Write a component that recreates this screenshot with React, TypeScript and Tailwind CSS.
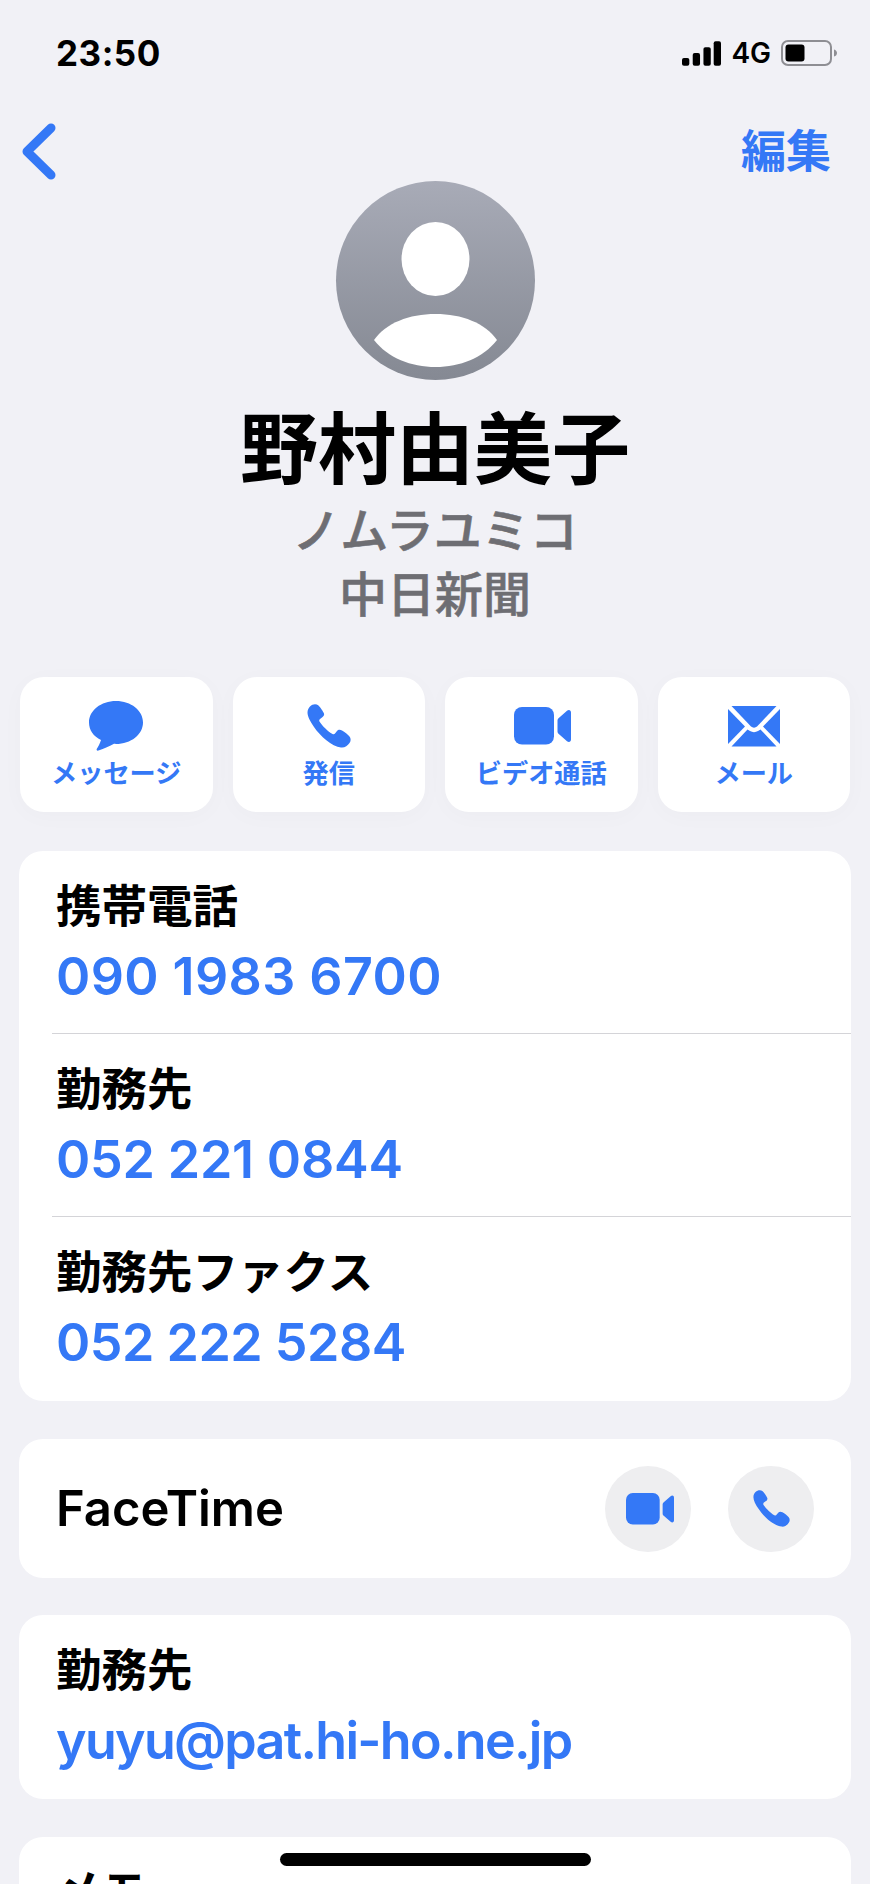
import React from 'react';

const jp = 'font-["Inter","Noto_Sans_CJK_JP",sans-serif]';

const PhoneIcon = ({ className }: { className: string }) => (
    <svg viewBox="0 0 44 44" className={className} fill="currentColor">
        <path d="M3 2.5C5.5 0 9-.5 11.5 1.5C13 3 16 7 17 9.5C17.5 11 16.5 12.5 15 13.5L13 15C12 15.8 12 17 12.8 18C15.5 22 21 27.5 25.5 30C26.5 30.6 27.5 30.3 28.2 29.2L30 27C31 25.7 33 25.3 35 26.5C37.5 28 41 30.5 42.5 32.5C44 34.5 44 37 42.5 39C40.5 42 37.5 44 34 43.5C25 42.5 13 32 7 23C3 17 .5 12.5 .5 8.5C.5 6 1.5 4 3 2.5Z" />
    </svg>
);

const VideoIcon = ({ className }: { className: string }) => (
    <svg viewBox="0 0 57 38" className={className} fill="currentColor">
        <rect x="0" y="0" width="40" height="37.5" rx="8" />
        <path d="M43.5 13.5C43.5 12.5 44 11.7 44.8 11L53 3.8C54.8 2.3 57 3 57 5.5V32.5C57 35 54.8 35.7 53 34.2L44.8 27C44 26.3 43.5 25.5 43.5 24.5Z" />
    </svg>
);

const MessageIcon = () => (
    <svg viewBox="0 0 54 50" className="w-[54px] h-[50px] text-[#3478f6]" fill="currentColor">
        <path d="M27 0C12 0 0 9.5 0 21.5C0 29 4.5 35.5 12 39C11 42.5 9 46 8 47.5C7 49 8 50 9.5 49.5C15 48 21 45 25 42.8C25.7 42.8 26.3 43 27 43C42 43 54 33.5 54 21.5C54 9.5 42 0 27 0Z" />
    </svg>
);

const MailIcon = () => (
    <svg viewBox="0 0 52 41" className="w-[52px] h-[41px] text-[#3478f6]" fill="currentColor">
        <path d="M3.5 0H48.5L29 20.5C27.5 22 24.5 22 23 20.5Z" />
        <path d="M0 3L17 20.5L0 38Z" />
        <path d="M52 3L35 20.5L52 38Z" />
        <path d="M3.5 40.5L19.5 23.5L22 25C24.5 26.5 27.5 26.5 30 25L32.5 23.5L48.5 40.5Z" />
    </svg>
);

const actions = [
    { label: 'メッセージ', icon: <MessageIcon /> },
    { label: '発信', icon: <PhoneIcon className="w-[44px] h-[44px] text-[#3478f6]" /> },
    { label: 'ビデオ通話', icon: <VideoIcon className="ml-[3px] w-[57px] h-[38px] text-[#3478f6]" /> },
    { label: 'メール', icon: <MailIcon /> },
];

const phones = [
    { label: '携帯電話', value: '090 1983 6700', track: 'tracking-[0.4px]' },
    { label: '勤務先', value: '052 221 0844', track: 'tracking-[-0.2px]' },
    { label: '勤務先ファクス', value: '052 222 5284', track: 'tracking-[-0.5px]' },
];

const Field = ({ label, value, track }: { label: string; value: string; track: string }) => (
    <div className="pt-[31px]">
        <div className="text-[45.5px] leading-[50px] font-semibold text-black">{label}</div>
        <div className={`mt-[13px] text-[52px] leading-[64px] font-semibold text-[#3478f6] ${track}`}>{value}</div>
    </div>
);

export default function App() {
    return (
        <div className={`${jp} relative w-[870px] h-[1884px] overflow-hidden bg-[#f1f1f6]`}>
            {/* status bar */}
            <div className="h-[122px] pl-[56px] pr-[33px] pt-[34px] flex justify-between items-start">
                <span className="text-[35px] leading-[38px] font-bold text-black tracking-[0.5px]">23:50</span>
                <div className="flex items-center gap-[10px] h-[38px]">
                    <svg viewBox="0 0 40 25" className="w-[39px] h-[25px]" fill="black">
                        <rect x="0" y="17" width="7.5" height="8" rx="2" />
                        <rect x="11" y="12" width="7.5" height="13" rx="2" />
                        <rect x="22" y="6" width="7.5" height="19" rx="2" />
                        <rect x="32.5" y="0" width="7.5" height="25" rx="2" />
                    </svg>
                    <span className="text-[28px] leading-[30px] font-semibold text-black">4G</span>
                    <svg viewBox="0 0 56 26" className="w-[56px] h-[26px]">
                        <rect x="1" y="1" width="49" height="24" rx="6" fill="none" stroke="#8e8e93" strokeWidth="2" />
                        <rect x="4.5" y="4.5" width="19" height="17" rx="3" fill="black" />
                        <path d="M53 9.5C55 10 56 11.5 56 13C56 14.5 55 16 53 16.5Z" fill="#8e8e93" />
                    </svg>
                </div>
            </div>

            {/* nav */}
            <div className="h-[59px] pl-[22px] pr-[39px] flex justify-between items-center">
                <svg viewBox="0 0 34 57" className="w-[34px] h-[57px]" fill="none" stroke="#3478f6" strokeWidth="9" strokeLinecap="round" strokeLinejoin="round">
                    <path d="M29 5L5 28.5L29 52" />
                </svg>
                <span className="text-[45px] leading-[50px] font-semibold text-[#3478f6]">編集</span>
            </div>

            {/* contact header */}
            <div className="flex flex-col items-center">
                <div className="w-[199px] h-[199px] rounded-full overflow-hidden bg-gradient-to-b from-[#a8abb7] to-[#858993]">
                    <svg viewBox="0 0 199 199" className="w-full h-full" fill="white">
                        <ellipse cx="99.5" cy="78" rx="34" ry="37" />
                        <path d="M38 159C50 142 73 133 99.5 133C126 133 149 142 161 159C147 177 124 186 99.5 186C75 186 52 177 38 159Z" />
                    </svg>
                </div>
                <h1 className="mt-[30px] text-[78px] leading-[80px] font-bold text-black">野村由美子</h1>
                <div className="mt-[8px] text-[48px] leading-[65px] font-medium text-[#6e6e73] [-webkit-text-stroke:0.6px_#6e6e73]">ノムラユミコ</div>
                <div className="-mt-[1px] text-[48px] leading-[65px] font-medium text-[#6e6e73] [-webkit-text-stroke:0.6px_#6e6e73]">中日新聞</div>
            </div>

            {/* actions */}
            <div className="mt-[50px] px-[20px] grid grid-cols-4 gap-[20px]">
                {actions.map((action) => (
                    <div key={action.label} className="h-[135px] rounded-[24px] bg-white shadow-[0_4px_24px_rgba(0,0,0,0.025)] flex flex-col items-center">
                        <div className="h-[50px] mt-[24px] flex items-center justify-center">{action.icon}</div>
                        <div className="mt-[8px] text-[26.2px] leading-[30px] font-semibold text-[#3478f6]">{action.label}</div>
                    </div>
                ))}
            </div>

            {/* phones */}
            <div className="mt-[39px] mx-[19px] rounded-[24px] bg-white">
                {phones.map((phone, i) => (
                    <div key={phone.label} className="pl-[37px]">
                        <div className={i < 2 ? 'h-[183px] -ml-[4px] pl-[4px] border-b border-[#d4d4d8]' : 'h-[184px]'}>
                            <Field label={phone.label} value={phone.value} track={phone.track} />
                        </div>
                    </div>
                ))}
            </div>

            {/* facetime */}
            <div className="mt-[38px] mx-[19px] h-[139px] rounded-[24px] bg-white pl-[37px] pr-[37px] flex items-center justify-between">
                <span className="text-[49px] leading-[60px] font-semibold text-black">FaceTime</span>
                <div className="flex gap-[37px]">
                    <div className="w-[86px] h-[86px] rounded-full bg-[#eeeef0] flex items-center justify-center">
                        <VideoIcon className="ml-[3px] w-[48px] h-[32px] text-[#3478f6]" />
                    </div>
                    <div className="w-[86px] h-[86px] rounded-full bg-[#eeeef0] flex items-center justify-center">
                        <PhoneIcon className="w-[37px] h-[37px] text-[#3478f6]" />
                    </div>
                </div>
            </div>

            {/* email */}
            <div className="mt-[37px] mx-[19px] h-[184px] rounded-[24px] bg-white pl-[37px]">
                <Field label="勤務先" value="yuyu@pat.hi-ho.ne.jp" track="tracking-[-1.7px]" />
            </div>

            {/* memo */}
            <div className="mt-[38px] mx-[19px] h-[184px] rounded-[24px] bg-white pl-[37px]">
                <div className="pt-[30px] text-[45.5px] leading-[50px] font-semibold text-black">メモ</div>
            </div>

            <div className="absolute left-[280px] top-[1853px] w-[311px] h-[13px] rounded-full bg-black" />
        </div>
    );
}
